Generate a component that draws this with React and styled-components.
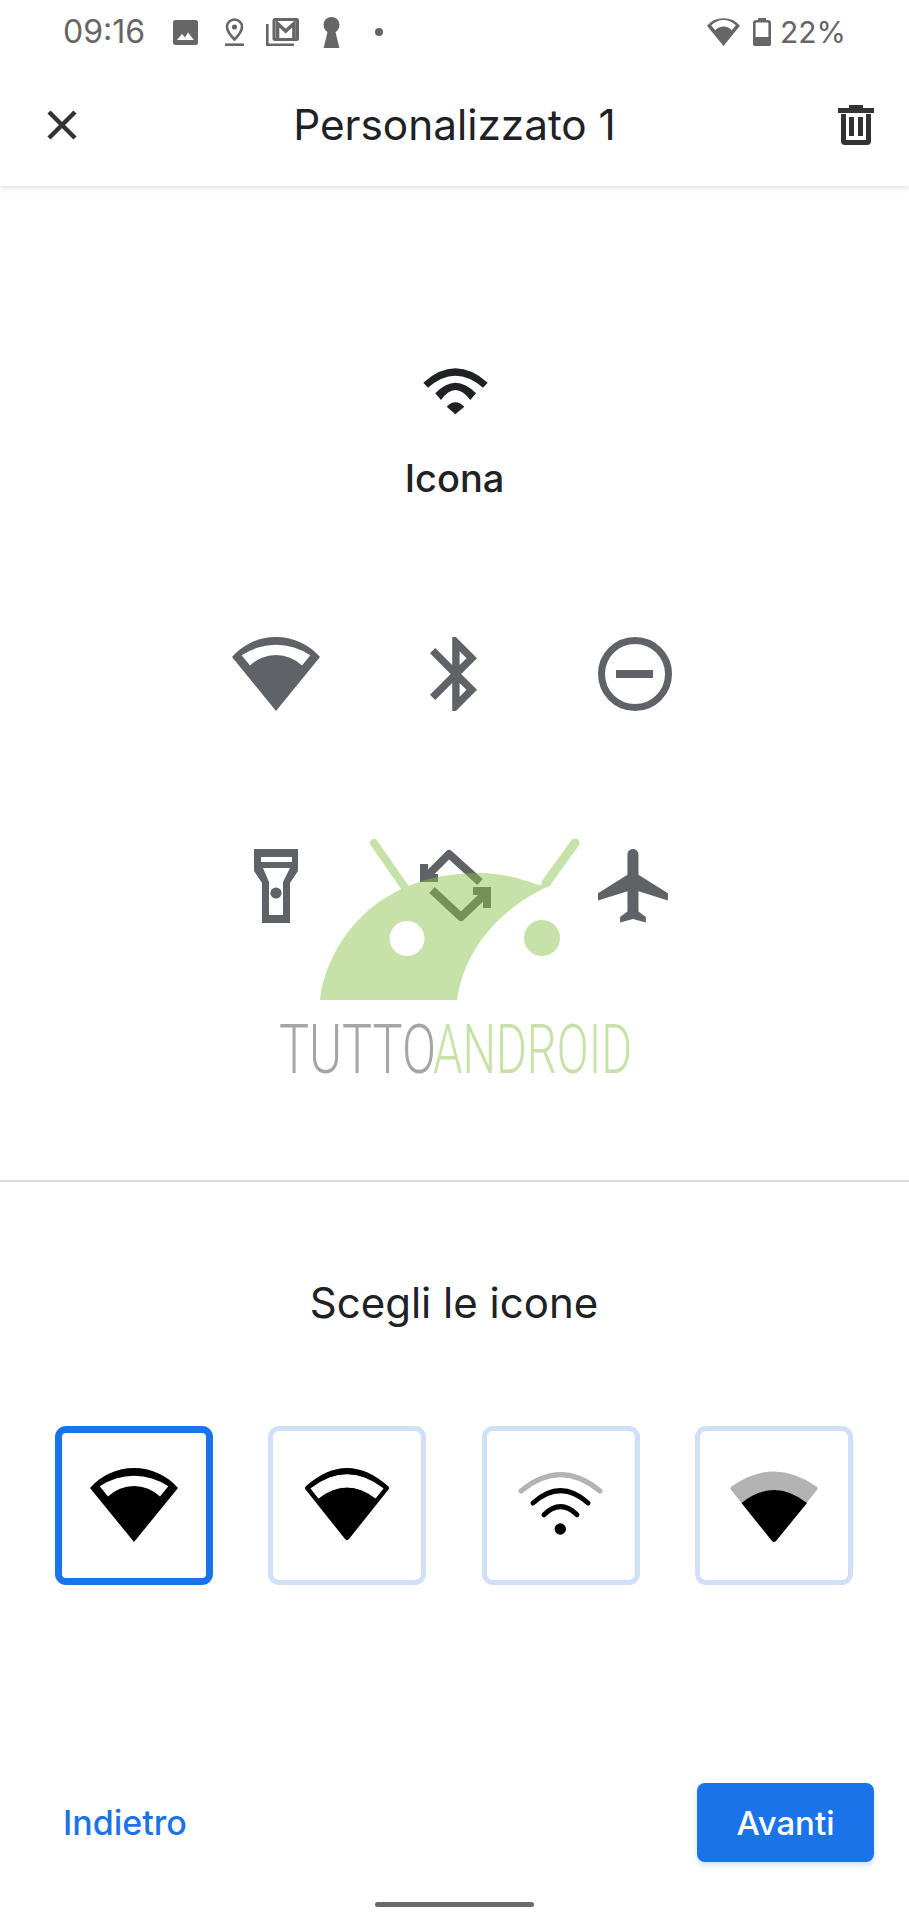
import React from "react";
import styled, { createGlobalStyle } from "styled-components";

const Global = createGlobalStyle`
  html, body { margin: 0; padding: 0; background: #fff; }
  body { font-family: Inter, "Noto Sans", sans-serif; }
`;

const Page = styled.div`
  position: relative;
  width: 909px;
  height: 1920px;
  overflow: hidden;
  display: flex;
  flex-direction: column;
  background: #fff;
`;

const StatusBar = styled.div`
  position: relative;
  z-index: 2;
  height: 64px;
  box-sizing: border-box;
  padding: 0 63px;
  display: flex;
  align-items: center;
  background: #fff;
  color: #666;
`;
const StatusText = styled.span`
  margin-left: ${(p) => p.$ml || 0}px;
  font-size: ${(p) => p.$size}px;
  line-height: 64px;
`;
const StatusGlyph = styled.svg`
  flex: none;
  margin-left: ${(p) => p.$ml}px;
  fill: #666;
`;
const Spacer = styled.div`
  flex: 1;
`;

const Header = styled.header`
  position: relative;
  z-index: 1;
  height: 122px;
  box-sizing: border-box;
  padding: 0 35px;
  display: grid;
  grid-template-columns: 1fr auto 1fr;
  align-items: center;
  background: #fff;
  box-shadow: 0 2px 6px rgba(60, 64, 67, 0.16);
`;
const Title = styled.h1`
  margin: 0 0 2px;
  font-size: 42.3px;
  font-weight: 400;
  color: #202124;
`;
const HeaderIcon = styled.svg`
  flex: none;
  justify-self: ${(p) => p.$side};
  margin-left: ${(p) => p.$ml || 0}px;
  fill: #333;
`;

const Preview = styled.section`
  position: relative;
  height: 996px;
  box-sizing: border-box;
  padding-top: 180px;
  display: flex;
  flex-direction: column;
  align-items: center;
  border-bottom: 2px solid #dadce0;
`;
const TopIcon = styled.svg`
  fill: #202124;
`;
const Label = styled.div`
  margin-top: 37px;
  font-size: 38px;
  line-height: 50px;
  font-weight: 500;
  color: #202124;
`;
const IconGrid = styled.div`
  margin-top: 131px;
  display: grid;
  grid-template-columns: repeat(3, 180px);
  grid-auto-rows: 80px;
  row-gap: 132px;
  justify-items: center;
`;
const GridIcon = styled.svg`
  display: block;
  fill: #5f6368;
`;
const Watermark = styled.svg`
  position: absolute;
  left: 270px;
  top: 644px;
  pointer-events: none;
`;

const Chooser = styled.section`
  height: 600px;
  box-sizing: border-box;
  padding: 93px 56px 0 55px;
  display: flex;
  flex-direction: column;
`;
const ChooserTitle = styled.h2`
  margin: 0;
  text-align: center;
  font-size: 42px;
  line-height: 56px;
  font-weight: 400;
  color: #202124;
`;
const CardRow = styled.div`
  margin-top: 95px;
  display: flex;
  justify-content: space-between;
`;
const Card = styled.div`
  width: 158px;
  height: 159px;
  box-sizing: border-box;
  display: flex;
  align-items: center;
  justify-content: center;
  border: ${(p) => (p.$selected ? "7px solid #1a73e8" : "5px solid #cfe0f8")};
  border-radius: 11px;
`;

const Footer = styled.footer`
  position: absolute;
  left: 63px;
  right: 35px;
  top: 1783px;
  height: 79px;
  display: flex;
  align-items: center;
  justify-content: space-between;
`;
const BackLink = styled.span`
  font-size: 34px;
  font-weight: 500;
  color: #1a73e8;
`;
const NextButton = styled.button`
  width: 177px;
  height: 79px;
  padding: 0;
  border: none;
  border-radius: 8px;
  background: #1a73e8;
  color: #fff;
  font-family: inherit;
  font-size: 33px;
  font-weight: 500;
  box-shadow: 0 3px 6px rgba(26, 115, 232, 0.22);
`;
const HomeHandle = styled.div`
  position: absolute;
  left: 375px;
  top: 1902px;
  width: 159px;
  height: 5px;
  border-radius: 3px;
  background: #6a6a6a;
`;

const WIFI = "M0 20A58.4 58.4 0 0 1 88 20L44 74ZM9.7 18.3A61.2 61.2 0 0 1 78.3 18.3L70 28.5A37.4 37.4 0 0 0 18 28.5Z";
const WIFI_SMALL = "M0 20A58.4 58.4 0 0 1 88 20L44 74ZM11 19A46 46 0 0 1 77 19L66 32A30 30 0 0 0 22 32Z";

const CardSvg = ({ children }) => (
  <svg width="96" height="85" viewBox="0 0 96 85">
    {children}
  </svg>
);

export default function App() {
  return (
    <Page>
      <Global />
      <StatusBar>
        <StatusText $size={32}>09:16</StatusText>
        <StatusGlyph $ml={28} width="25" height="25" viewBox="0 0 25 25">
          <rect width="25" height="25" rx="2.5" />
          <path d="M4 20l5-6 3 3.5 3-5 6 7.5z" fill="#fff" />
        </StatusGlyph>
        <StatusGlyph $ml={27} width="19" height="28" viewBox="0 0 19 28">
          <path d="M9.5 1.5a7.5 7.5 0 0 1 7.5 7.5c0 5-7.5 12.5-7.5 12.5S2 14 2 9a7.5 7.5 0 0 1 7.5-7.5Z" fill="none" stroke="#666" strokeWidth="2.6" />
          <circle cx="9.5" cy="9" r="2.6" />
          <rect y="25.4" width="19" height="2.6" />
        </StatusGlyph>
        <StatusGlyph $ml={22} width="33" height="28" viewBox="0 0 33 28">
          <path d="M1.3 6V26.7H28" fill="none" stroke="#666" strokeWidth="2.6" />
          <rect x="6.5" width="26.5" height="23" rx="2.5" />
          <rect x="9.5" y="3" width="20.5" height="17" fill="#fff" />
          <path d="M11.5 20V5.5L19.7 13 28 5.5V20" fill="none" stroke="#666" strokeWidth="3.6" />
        </StatusGlyph>
        <StatusGlyph $ml={24} width="17" height="31" viewBox="0 0 17 31">
          <circle cx="8.5" cy="8" r="8" />
          <path d="M5 13L0.6 31H16.4L12 13Z" />
        </StatusGlyph>
        <StatusGlyph $ml={35} width="8" height="8" viewBox="0 0 8 8">
          <circle cx="4" cy="4" r="4" />
        </StatusGlyph>
        <Spacer />
        <StatusGlyph $ml={0} width="33" height="28" viewBox="0 0 88 74">
          <path d={WIFI_SMALL} fillRule="evenodd" />
        </StatusGlyph>
        <StatusGlyph $ml={13} width="18" height="28" viewBox="0 0 18 28">
          <rect x="5" width="8" height="4" />
          <rect x="1.3" y="3.3" width="15.4" height="23.4" rx="2" fill="none" stroke="#666" strokeWidth="2.6" />
          <rect y="19" width="18" height="9" rx="2" />
        </StatusGlyph>
        <StatusText $size={30} $ml={9}>22%</StatusText>
      </StatusBar>

      <Header>
        <HeaderIcon $side="start" $ml={12} width="30" height="30" viewBox="0 0 30 30">
          <path d="M2 2L28 28M28 2L2 28" fill="none" stroke="#333" strokeWidth="4.5" />
        </HeaderIcon>
        <Title>Personalizzato 1</Title>
        <HeaderIcon $side="end" width="36" height="40" viewBox="0 0 36 40">
          <path d="M11 0h14v3h11v5H0V3h11z" />
          <path fillRule="evenodd" d="M3 9h30v27a4 4 0 0 1-4 4H7a4 4 0 0 1-4-4zM8 9v26h20V9z" />
          <rect x="11" y="12" width="5" height="19" />
          <rect x="20" y="12" width="5" height="19" />
        </HeaderIcon>
      </Header>

      <Preview>
        <TopIcon width="72" height="50" viewBox="418 366 72 50">
          <path d="M422.3 382.7Q454.3 354 486.7 382.7L482 387.7Q454.3 363.7 427 387.7Z" />
          <path d="M434.3 393.3Q454.3 372 475 393.3L469.3 400Q454.3 380 440 400Z" />
          <path d="M445.7 406.7Q454.3 398 463.3 406.7L454.3 414.3Z" />
        </TopIcon>
        <Label>Icona</Label>
        <IconGrid>
          <GridIcon width="96" height="80" viewBox="226 634 96 80">
            <path d={WIFI} fillRule="evenodd" transform="translate(231 637)" />
          </GridIcon>
          <GridIcon width="96" height="80" viewBox="406 634 96 80">
            <path
              transform="translate(410.5 629.6) scale(3.7)"
              d="M17.71 7.71L12 2h-1v7.59L6.41 5 5 6.41 10.59 12 5 17.59 6.41 19 11 14.41V22h1l5.71-5.71-4.3-4.29 4.3-4.29zM13 5.83l1.88 1.88L13 9.59V5.83zm1.88 10.46L13 18.17v-3.76l1.88 1.88z"
            />
          </GridIcon>
          <GridIcon width="96" height="80" viewBox="586 634 96 80">
            <circle cx="634" cy="674" r="33.5" fill="none" stroke="#5f6368" strokeWidth="7" />
            <rect x="615" y="670" width="37" height="8" />
          </GridIcon>
          <GridIcon width="96" height="80" viewBox="226 846 96 80">
            <path
              fillRule="evenodd"
              d="M253 849H297V871L289 883V923H261V883L253 871ZM260 857V862H291V857ZM262 868L268 882V915H282V882L289 868Z"
            />
            <circle cx="275" cy="893" r="5.6" />
          </GridIcon>
          <GridIcon width="96" height="80" viewBox="406 846 96 80">
            <g fill="none" stroke="#5f6368" strokeWidth="8" strokeLinejoin="round">
              <path d="M479 882L448 854L425 877" />
              <path d="M423 864V878H437" strokeLinejoin="miter" />
              <path d="M431 890L460 917L484 894" />
              <path d="M472 891H486V908" strokeLinejoin="miter" />
            </g>
          </GridIcon>
          <GridIcon width="96" height="80" viewBox="586 846 96 80">
            <path
              transform="translate(589.64 841.64) scale(3.68)"
              d="M21 16v-2l-8-5V3.5c0-.83-.67-1.5-1.5-1.5S10 2.67 10 3.5V9l-8 5v2l8-2.5V19l-2 1.5V22l3.5-1 3.5 1v-1.5L13 19v-5.5l8 2.5z"
            />
          </GridIcon>
        </IconGrid>
        <Watermark width="380" height="280" viewBox="270 830 380 280">
          <g fill="#8bc34a" stroke="#8bc34a" opacity="0.48">
            <path
              stroke="none"
              fillRule="evenodd"
              d="M320 1000C325 955 365 873 480 873C500 873 520 878 538 885L553 884C505 905 465 945 457 1000ZM407 921A17.5 17.5 0 1 0 407 956A17.5 17.5 0 1 0 407 921Z"
            />
            <path d="M374 843L408 892" fill="none" strokeWidth="8" strokeLinecap="round" />
            <path d="M575 843L546 883" fill="none" strokeWidth="9" strokeLinecap="round" />
            <circle cx="542" cy="938" r="18" stroke="none" />
          </g>
          <text transform="translate(279 1073) scale(0.74 1)" fontFamily="Roboto" fontWeight="300" fontSize="68" fill="#a5a5a5">TUTTO</text>
          <text transform="translate(433 1073) scale(0.693 1)" fontFamily="Roboto" fontWeight="300" fontSize="68" fill="#c7e2a7">ANDROID</text>
        </Watermark>
      </Preview>

      <Chooser>
        <ChooserTitle>Scegli le icone</ChooserTitle>
        <CardRow>
          <Card $selected>
            <CardSvg>
              <path d={WIFI} fillRule="evenodd" transform="translate(4 5)" />
            </CardSvg>
          </Card>
          <Card>
            <CardSvg>
              <path d="M8.5 25Q48 -10 87.5 25L48 74.5Z" stroke="#000" strokeWidth="5" strokeLinejoin="round" />
              <path d="M12 25.5Q48 -2 84 25.5L76.5 35Q48 13 19.5 35Z" fill="#fff" stroke="#fff" strokeWidth="1" strokeLinejoin="round" />
            </CardSvg>
          </Card>
          <Card>
            <CardSvg>
              <g fill="none" strokeWidth="5" strokeLinecap="round">
                <path d="M8 28Q47.5 -4.6 87 28" stroke="#b3b3b3" />
                <path d="M20 40Q47.5 15.4 75 40" stroke="#000" />
                <path d="M31 51.7Q47.5 35.7 64 51.7" stroke="#000" />
              </g>
              <circle cx="47.3" cy="66" r="5.7" />
            </CardSvg>
          </Card>
          <Card>
            <CardSvg>
              <path d="M7 25.5Q48 -3.5 89 25.5L48 76Z" fill="#b3b3b3" stroke="#b3b3b3" strokeWidth="5" strokeLinejoin="round" />
              <path d="M15.5 40Q48 14 81 40L50 78Q48 80 46 78Z" />
            </CardSvg>
          </Card>
        </CardRow>
      </Chooser>

      <Footer>
        <BackLink>Indietro</BackLink>
        <NextButton>Avanti</NextButton>
      </Footer>
      <HomeHandle />
    </Page>
  );
}
